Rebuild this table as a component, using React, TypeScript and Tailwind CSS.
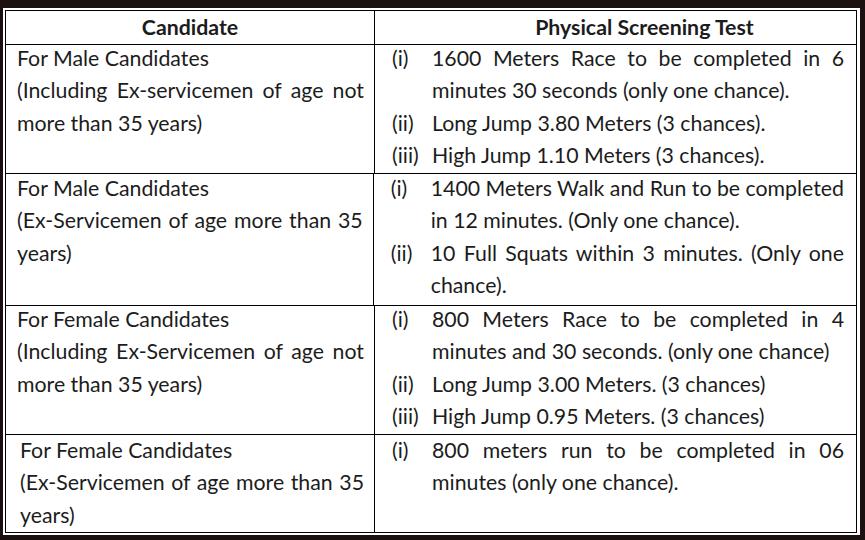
import React from "react";

type Item = { label: string; lines: string[] };
type Row = { left: string[]; leftPl: string; items: Item[]; h: string; mt: string; border: boolean };

const rows: Row[] = [
  {
    left: ["For Male Candidates", "(Including Ex-servicemen of age not", "more than 35 years)"],
    leftPl: "pl-[11px]",
    items: [
      { label: "(i)", lines: ["1600 Meters Race to be completed in 6", "minutes 30 seconds (only one chance)."] },
      { label: "(ii)", lines: ["Long Jump 3.80 Meters (3 chances)."] },
      { label: "(iii)", lines: ["High Jump 1.10 Meters (3 chances)."] },
    ],
    h: "h-[129px]",
    mt: "mt-[-3px]",
    border: true,
  },
  {
    left: ["For Male Candidates", "(Ex-Servicemen of age more than 35", "years)"],
    leftPl: "pl-[11px]",
    items: [
      { label: "(i)", lines: ["1400 Meters Walk and Run to be completed", "in 12 minutes. (Only one chance)."] },
      { label: "(ii)", lines: ["10 Full Squats within 3 minutes. (Only one", "chance)."] },
    ],
    h: "h-[132px]",
    mt: "mt-[-2px]",
    border: true,
  },
  {
    left: ["For Female Candidates", "(Including Ex-Servicemen of age not", "more than 35 years)"],
    leftPl: "pl-[11px]",
    items: [
      { label: "(i)", lines: ["800 Meters Race to be completed in 4", "minutes and 30 seconds. (only one chance)"] },
      { label: "(ii)", lines: ["Long Jump 3.00 Meters. (3 chances)"] },
      { label: "(iii)", lines: ["High Jump 0.95 Meters. (3 chances)"] },
    ],
    h: "h-[129px]",
    mt: "mt-[-3px]",
    border: true,
  },
  {
    left: ["For Female Candidates", "(Ex-Servicemen of age more than 35", "years)"],
    leftPl: "pl-[14px]",
    items: [{ label: "(i)", lines: ["800 meters run to be completed in 06", "minutes (only one chance)."] }],
    h: "h-[97px]",
    mt: "mt-[-1px]",
    border: false,
  },
];

function Lines({ lines }: { lines: string[] }) {
  return (
    <>
      {lines.map((l, i) => {
        const justify = i < lines.length - 1;
        return (
          <div
            key={i}
            className={justify ? "text-justify [text-align-last:justify] whitespace-nowrap" : "whitespace-nowrap"}
          >
            {l}
          </div>
        );
      })}
    </>
  );
}

export default function App() {
  return (
    <div
      className="w-[865px] h-[540px] bg-[#1b1111] pt-[8px] pl-[3px] pr-[5px] pb-[5px] text-[#1c1c1c]"
      style={{ fontFamily: "Lato, 'Noto Sans', sans-serif" }}
    >
      <div className="h-full bg-white pt-[2px] pl-[2px] pr-[3px] pb-[2px]">
        <div className="w-[852px] h-[523px] border border-black flex flex-col text-[21.3px] leading-[32.4px] overflow-hidden">
          <div className="flex h-[34px] border-b border-black font-bold">
            <div className="w-[369px] border-r border-black text-center">Candidate</div>
            <div className="flex-1 text-center pl-[58px]">Physical Screening Test</div>
          </div>
          {rows.map((r, ri) => (
            <div key={ri} className={`flex ${r.h} ${r.border ? "border-b border-black" : ""}`}>
              <div className={`w-[369px] border-r border-black ${r.leftPl} pr-[10px]`}>
                <div className={r.mt}>
                  <div className="whitespace-nowrap">{r.left[0]}</div>
                  <Lines lines={r.left.slice(1)} />
                </div>
              </div>
              <div className="flex-1 pl-[17px] pr-[12px]">
                <div className={r.mt}>
                  {r.items.map((it, ii) => (
                    <div key={ii} className="flex">
                      <div className="w-[40px] shrink-0">{it.label}</div>
                      <div className="flex-1 min-w-0">
                        <Lines lines={it.lines} />
                      </div>
                    </div>
                  ))}
                </div>
              </div>
            </div>
          ))}
        </div>
      </div>
    </div>
  );
}
